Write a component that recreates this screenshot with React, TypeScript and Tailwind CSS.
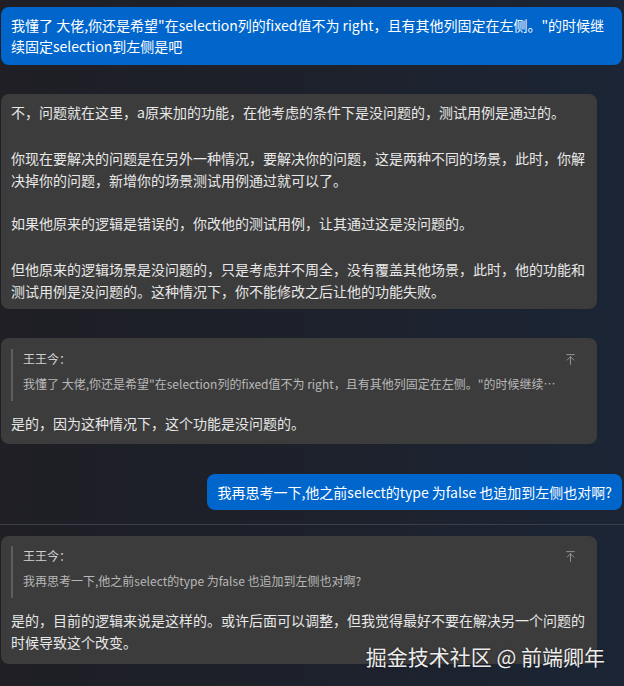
import { ArrowUpToLine } from "lucide-react";

const font = { fontFamily: '"Noto Sans CJK SC", "Noto Sans", sans-serif' };

function UserBubble({ text, className }: { text: string; className?: string }) {
	return (
		<div className={`rounded-lg bg-[#0066cc] px-[10px] text-[14px] text-white ${className ?? ""}`}>{text}</div>
	);
}

function Quote({ text }: { text: string }) {
	return (
		<div className="mb-[11px] flex border-l-2 border-[#5e5e5e] pb-[7px] pl-[10px] pr-[10px]">
			<div className="min-w-0 flex-1 pr-[6px]">
				<div className="text-[12px] leading-[20px] text-[#d0d0d0]">王王今：</div>
				<div className="mt-[5px] truncate text-[12px] leading-[20px] text-[#b8b8b8]">{text}</div>
			</div>
			<ArrowUpToLine size={13} strokeWidth={1.5} className="mt-[4px] shrink-0 text-[#a8a8a8]" />
		</div>
	);
}

export default function App() {
	const first =
		'我懂了 大佬,你还是希望"在selection列的fixed值不为 right，且有其他列固定在左侧。"的时候继续固定selection到左侧是吧';
	const second = "我再思考一下,他之前select的type 为false 也追加到左侧也对啊?";

	return (
		<div
			style={font}
			className="relative h-[686px] w-[624px] overflow-hidden bg-gradient-to-r from-[#1f1f25] via-[#1d212b] to-[#1b2535]"
		>
			<div className="px-[1px] pt-[7px]">
				<UserBubble text={first} className="mr-[1px] py-[8px] leading-[21px]" />

				<div className="mt-[29px] w-[596px] rounded-lg bg-[#3c3c3c] px-[10px] py-[7px] text-[14px] leading-[22px] text-[#e8e8e8]">
					<p className="mb-[24px]">不，问题就在这里，a原来加的功能，在他考虑的条件下是没问题的，测试用例是通过的。</p>
					<p className="mb-[21px]">
						你现在要解决的问题是在另外一种情况，要解决你的问题，这是两种不同的场景，此时，你解决掉你的问题，新增你的场景测试用例通过就可以了。
					</p>
					<p className="mb-[24px]">如果他原来的逻辑是错误的，你改他的测试用例，让其通过这是没问题的。</p>
					<p>
						但他原来的逻辑场景是没问题的，只是考虑并不周全，没有覆盖其他场景，此时，他的功能和测试用例是没问题的。这种情况下，你不能修改之后让他的功能失败。
					</p>
				</div>

				<div className="mt-[29px] w-[596px] rounded-lg bg-[#3c3c3c] px-[10px] pb-[10px] pt-[11px] text-[14px] leading-[22px] text-[#e8e8e8]">
					<Quote text={first} />
					<p>是的，因为这种情况下，这个功能是没问题的。</p>
				</div>

				<div className="mt-[30px] flex justify-end pr-[1px]">
					<UserBubble text={second} className="py-[8px] leading-[20px]" />
				</div>
			</div>

			<div className="mt-[14px] h-px w-full bg-[#3b3e46]" />

			<div className="px-[1px] pt-[11px]">
				<div className="w-[596px] rounded-lg bg-[#3c3c3c] px-[10px] pb-[11px] pt-[10px] text-[14px] leading-[22px] text-[#e8e8e8]">
					<Quote text={second} />
					<p>
						是的，目前的逻辑来说是这样的。或许后面可以调整，但我觉得最好不要在解决另一个问题的时候导致这个改变。
					</p>
				</div>
			</div>

			<div className="absolute bottom-[17px] right-[19px] text-[21px] leading-[26px] text-[#ececec] [text-shadow:0_0_2px_rgba(0,0,0,0.6)]">
				掘金技术社区 @ 前端卿年
			</div>
		</div>
	);
}
